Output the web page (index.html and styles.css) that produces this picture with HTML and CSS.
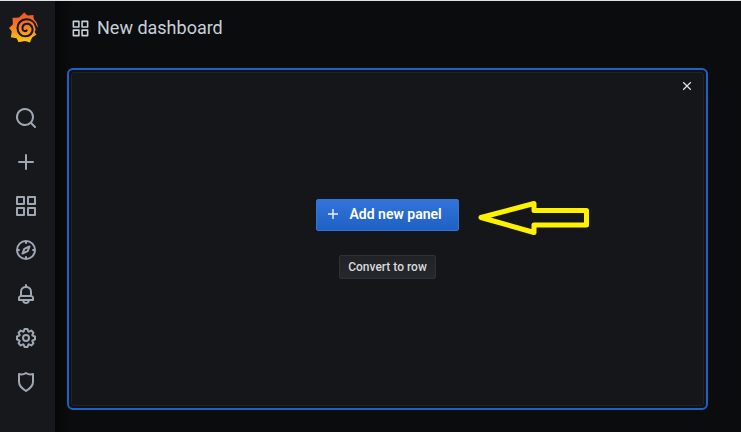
FILE: index.html
```html
<!DOCTYPE html>
<html lang="en">
<head>
<meta charset="utf-8">
<title>New dashboard</title>
<link rel="stylesheet" href="styles.css">
</head>
<body>
<svg width="0" height="0" class="defs"><symbol id="apps" viewBox="0 0 24 24"><g fill="none" stroke="currentColor" stroke-width="2" stroke-linejoin="round"><path d="M3 3h7v7H3zM14 3h7v7h-7zM3 14h7v7H3zM14 14h7v7h-7z"/></g></symbol></svg>
<div class="app">
<nav class="sidebar">
<svg class="logo" viewBox="0 0 30 32"><defs><linearGradient id="g" x1="0" y1="0" x2="0" y2="1"><stop offset="0" stop-color="#ef4e28"/><stop offset=".45" stop-color="#f47b29"/><stop offset="1" stop-color="#fecb09"/></linearGradient></defs>
<path fill="url(#g)" d="M16.200 .3Q18 2.400 20 3.600Q22.300 3.300 25.500 2.900Q25.300 5.500 26.200 7.700Q29.600 10.500 29.700 15.300L27.500 14.500Q28 18 26.600 20Q27.800 22 28.600 22.500Q26.200 24 24.200 25.600Q22.800 28 22 30.600Q19 29.300 16.500 28.900Q13 29.800 10.300 30Q9.900 28 8.500 26.200Q5.800 25.800 2.800 25.300Q3.600 22 3.700 19.600Q2.400 17.300 1 16Q3.400 14 4.900 12.200Q4.600 9 4.500 5.700Q8 6 11.300 5.200Q14 2.800 16.200 .3Z"/>
<path fill="none" stroke="#16181c" stroke-width="2.100" stroke-linecap="round" d="M28.300 15.500C27 10 22.800 7.200 18.200 7.300C13 7.500 9.400 11.500 9.500 16C9.600 21.200 13.300 24.400 17.500 24.300C22 24.100 25 20.800 24.600 17C24.200 13.300 21 11.300 18.300 11.800C15.200 12.300 13.900 15 14.600 17.300C15.300 19.300 17.700 19.600 18.600 18.300"/></svg>
<svg class="icon" viewBox="0 0 24 24"><path d="M21.71,20.29,18,16.61A9,9,0,1,0,16.61,18l3.68,3.68a1,1,0,0,0,1.42,0A1,1,0,0,0,21.71,20.29ZM11,18a7,7,0,1,1,7-7A7,7,0,0,1,11,18Z"/></svg>
<svg class="icon" viewBox="0 0 24 24"><path d="M19,11H13V5a1,1,0,0,0-2,0v6H5a1,1,0,0,0,0,2h6v6a1,1,0,0,0,2,0V13h6a1,1,0,0,0,0-2Z"/></svg>
<svg class="icon"><use href="#apps"/></svg>
<svg class="icon line" viewBox="0 0 24 24"><circle cx="12" cy="12" r="9"/><path d="M12 3v2.7M12 18.3V21M3 12h2.7M18.3 12H21"/><path d="M15.5 8.5l-1.8 4.7-5.2 2.3 1.8-4.7z"/></svg>
<svg class="icon" viewBox="0 0 24 24"><path d="M18,13.18V10a6,6,0,0,0-5-5.91V3a1,1,0,0,0-2,0V4.09A6,6,0,0,0,6,10v3.18A3,3,0,0,0,4,16v2a1,1,0,0,0,1,1H8.14a4,4,0,0,0,7.72,0H19a1,1,0,0,0,1-1V16A3,3,0,0,0,18,13.18ZM8,10a4,4,0,0,1,8,0v3H8Zm4,10a2,2,0,0,1-1.72-1h3.44A2,2,0,0,1,12,20Zm6-3H6V16a1,1,0,0,1,1-1H17a1,1,0,0,1,1,1Z"/></svg>
<svg class="icon" viewBox="0 0 24 24"><path d="M21.32,9.55l-1.89-.63.89-1.78A1,1,0,0,0,20.13,6L18,3.87a1,1,0,0,0-1.15-.19l-1.78.89-.63-1.89A1,1,0,0,0,13.5,2h-3a1,1,0,0,0-.95.68L8.92,4.57,7.14,3.68A1,1,0,0,0,6,3.87L3.87,6a1,1,0,0,0-.19,1.15l.89,1.78-1.89.63A1,1,0,0,0,2,10.5v3a1,1,0,0,0,.68.95l1.89.63-.89,1.78A1,1,0,0,0,3.87,18L6,20.13a1,1,0,0,0,1.15.19l1.78-.89.63,1.89a1,1,0,0,0,.95.68h3a1,1,0,0,0,.95-.68l.63-1.89,1.78.89A1,1,0,0,0,18,20.13L20.13,18a1,1,0,0,0,.19-1.15l-.89-1.78,1.89-.63A1,1,0,0,0,22,13.5v-3A1,1,0,0,0,21.32,9.55ZM20,12.78l-1.2.4A2,2,0,0,0,17.64,16l.57,1.14-1.1,1.1L16,17.64a2,2,0,0,0-2.79,1.16l-.4,1.2H11.22l-.4-1.2A2,2,0,0,0,8,17.64l-1.14.57-1.1-1.1L6.36,16A2,2,0,0,0,5.2,13.18L4,12.78V11.22l1.2-.4A2,2,0,0,0,6.36,8L5.79,6.89l1.1-1.1L8,6.36A2,2,0,0,0,10.82,5.2l.4-1.2h1.56l.4,1.2A2,2,0,0,0,16,6.36l1.14-.57,1.1,1.1L17.64,8a2,2,0,0,0,1.16,2.79l1.2.4ZM12,8a4,4,0,1,0,4,4A4,4,0,0,0,12,8Zm0,6a2,2,0,1,1,2-2A2,2,0,0,1,12,14Z"/></svg>
<svg class="icon line" viewBox="0 0 24 24"><path d="M5 4.100Q9 5 12 3Q15 5 19 4.100V11.900C19 15.900 16.300 18 12 21C7.700 18 5 15.900 5 11.900Z"/></svg>
</nav>
<main class="main">
<header class="header"><svg class="title-icon"><use href="#apps"/></svg><h1>New dashboard</h1></header>
<section class="panel"><div class="panel-inner">
<button class="close" aria-label="Close"><svg viewBox="0 0 10 10"><path d="M1.200 1.200l7.600 7.600M8.800 1.200l-7.600 7.600"/></svg></button>
<div class="actions">
<button class="primary"><svg viewBox="0 0 12 12"><path d="M6 1v10M1 6h10"/></svg><span>Add new panel</span></button>
<button class="secondary">Convert to row</button>
</div>
<svg class="arrow" viewBox="0 0 112 36"><path d="M4 18.500L57 4.500V11.500H109.500V26H57V33.500Z"/></svg>
</div></section>
</main>
</div>
</body>
</html>
```
FILE: styles.css
```css
* { box-sizing: border-box; }
body { margin: 0; background: #0b0c0e; font-family: Roboto, "Liberation Sans", sans-serif; color: #c7d0d9; }
button { font: inherit; padding: 0; border: 0; }
.defs { position: absolute; }
.app { display: flex; width: 741px; height: 432px; border-top: 1px solid #dde3e3; overflow: hidden; }
.sidebar { width: 55px; flex: none; background: #16181c; display: flex; flex-direction: column; align-items: flex-start; gap: 20px; padding: 11px 0 0 14px; color: #9fa7b3; }
.logo { width: 30px; height: 32px; margin: 0 0 42px -6px; flex: none; }
.icon { width: 24px; height: 24px; flex: none; fill: currentColor; }
.line { fill: none; stroke: currentColor; stroke-width: 2; stroke-linejoin: round; }
.main { flex: 1; padding: 0 33px 0 12px; background: linear-gradient(90deg, #050607, #0b0c0e 16px); }
.header { height: 67px; padding: 17px 0 0 3.500px; display: flex; align-items: flex-start; }
.title-icon { width: 19px; height: 19px; margin-top: .5px; color: #c7d0d9; }
h1 { margin: 0 0 0 7.500px; font-size: 18px; line-height: 20px; font-weight: 400; }
.panel { width: 641px; height: 342px; border: 2px solid #1f60c4; border-radius: 6px; padding: 2px; background: #111216; }
.panel-inner { position: relative; height: 100%; border: 1px solid #202226; border-radius: 3px; background: #141619; display: flex; justify-content: center; padding-top: 126px; }
.close { position: absolute; top: 8px; right: 11px; width: 10px; height: 10px; background: none; }
.close svg { display: block; width: 10px; height: 10px; stroke: #d8dfe5; stroke-width: 1.300; }
.actions { display: flex; flex-direction: column; align-items: center; gap: 24px; }
.primary { width: 143px; height: 32px; border: 1px solid #3274d9; border-radius: 2px; background: linear-gradient(#3274d9, #1f60c4); color: #fff; display: flex; align-items: center; padding-left: 10px; padding-bottom: 2px; font-size: 14px; font-weight: 600; white-space: nowrap; }
.primary svg { width: 12px; height: 12px; stroke: #e9f1fc; stroke-width: 1.400; margin-right: 10.500px; }
.secondary { width: 97px; height: 24px; border: 1px solid #2c3235; border-radius: 2px; background: linear-gradient(#202226, #25282c); color: #d8d9da; font-size: 12px; font-weight: 500; white-space: nowrap; }
.arrow { position: absolute; left: 405px; top: 126px; width: 112px; height: 36px; fill: none; stroke: #fff200; stroke-width: 5; stroke-linejoin: round; }
```
